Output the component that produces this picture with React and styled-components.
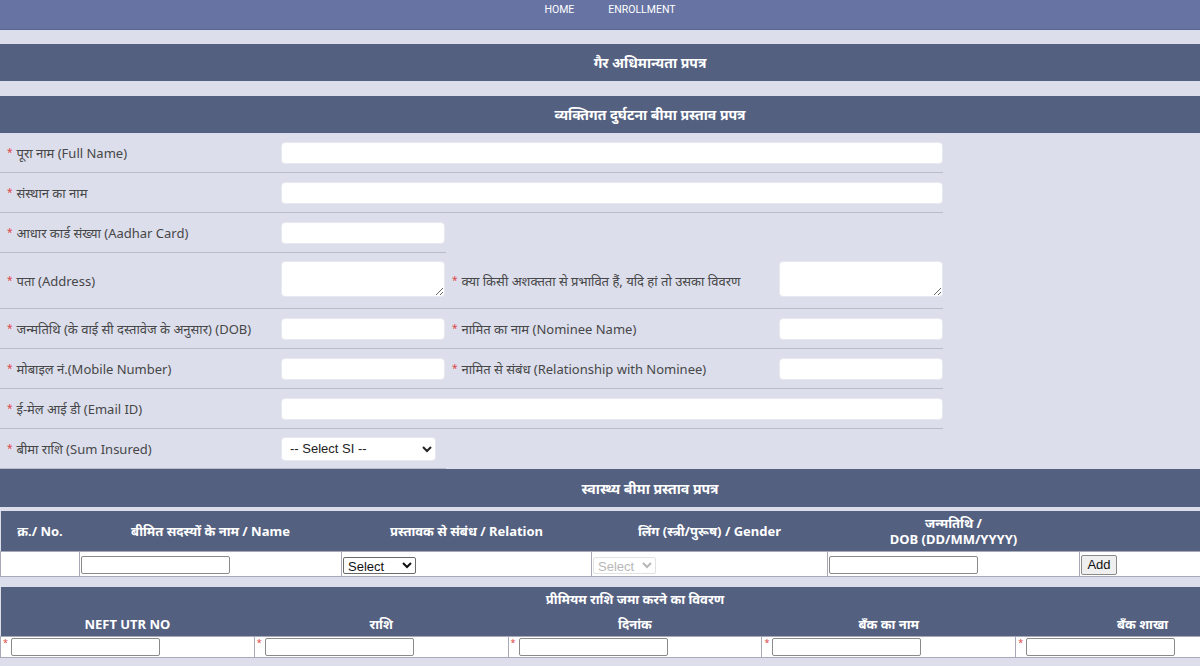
import React from 'react';
import styled, { createGlobalStyle } from 'styled-components';

const GlobalStyle = createGlobalStyle`
  html, body { margin: 0; padding: 0; overflow: hidden; }
  body {
    background: #dcdeec;
    font-family: "Noto Sans", "Noto Sans Devanagari", "Lohit Devanagari", sans-serif;
    color: #474747;
  }
  * { box-sizing: border-box; }
`;

const Page = styled.div`
  width: 1300px;
  padding-bottom: 20px;
`;

const Nav = styled.nav`
  height: 30px;
  background: #6673a3;
  border-bottom: 1px solid #5a6794;
  display: flex;
  justify-content: center;
  align-items: flex-start;
  gap: 34px;
  padding-right: 80px;
`;

const NavLink = styled.a`
  color: #fff;
  font-family: "Roboto", "Liberation Sans", sans-serif;
  font-size: 10.5px;
  line-height: 20px;
  text-transform: uppercase;
  text-decoration: none;
`;

const SectionTitle = styled.div`
  margin-top: ${(p) => p.$gap}px;
  height: ${(p) => p.$h || 37}px;
  background: #546080;
  color: #fff;
  font-weight: 700;
  font-size: 14px;
  display: flex;
  align-items: center;
  justify-content: center;
`;

const FormGrid = styled.div`
  display: grid;
  width: 943px;
  grid-template-columns: 276px 170px 328px 169px;
`;

const Cell = styled.div`
  display: flex;
  align-items: center;
  min-height: ${(p) => (p.$tall ? 56 : 40)}px;
  border-bottom: ${(p) => (p.$noLine ? 'none' : '1px solid #bcbcc6')};
  grid-column: span ${(p) => p.$span || 1};
  padding-left: ${(p) => p.$pl ?? 5}px;
  font-size: 13px;
  color: #474747;
`;

const Star = styled.span`
  color: #e0453f;
  font-size: 10px;
  margin-right: 4px;
  position: relative;
  top: -1px;
`;

const TextInput = styled.input`
  width: ${(p) => p.$w || 164}px;
  height: 22px;
  border: 1px solid #e8e8f0;
  border-radius: 4px;
  background: #fff;
  outline: none;
`;

const TextArea = styled.textarea`
  width: 164px;
  height: 36px;
  border: 1px solid #e8e8f0;
  border-radius: 4px;
  background: #fff;
  margin: 0 0 3px 0;
  display: block;
`;

const SISelect = styled.select`
  width: 155px;
  height: 24px;
  border: 1px solid #e8e8f0;
  border-radius: 4px;
  background: #fff;
  font-family: "Liberation Sans", Arial, sans-serif;
  font-size: 13px;
  color: #222;
  padding-left: 4px;
`;

const Table = styled.table`
  width: ${(p) => p.$w}px;
  border-collapse: collapse;
  margin-top: ${(p) => p.$gap}px;
  table-layout: fixed;
`;

const Th = styled.th`
  background: #546080;
  color: #fff;
  font-weight: 700;
  font-size: 13px;
  height: ${(p) => p.$h}px;
  padding: 0;
  text-align: center;
  line-height: 16px;
`;

const Td = styled.td`
  background: #fff;
  border: 1px solid #a7a9b8;
  height: ${(p) => p.$h}px;
  padding: 0 1px;
  vertical-align: middle;
`;

const SmallInput = styled.input`
  width: 149px;
  height: 18px;
  border: 1px solid #8a8a8a;
  border-radius: 2px;
  padding: 1px 2px;
  background: #fff;
  vertical-align: middle;
`;

const SmallSelect = styled.select`
  width: ${(p) => p.$w}px;
  height: 17px;
  font-family: "Liberation Sans", Arial, sans-serif;
  font-size: 13px;
  border: 1px solid ${(p) => (p.disabled ? '#d6d6d6' : '#6a6a6a')};
  border-radius: 2px;
  color: ${(p) => (p.disabled ? '#9a9a9a' : '#111')};
  background: #fff;
  padding: 0;
  vertical-align: middle;
`;

const AddButton = styled.button`
  height: 20px;
  width: 36px;
  font-family: "Liberation Sans", Arial, sans-serif;
  font-size: 13px;
  border: 1px solid #8a8a8a;
  border-radius: 2px;
  background: #efefef;
  color: #111;
  padding: 0;
  vertical-align: middle;
`;

const StarCell = styled.div`
  display: flex;
  align-items: center;
  height: 19px;
`;

const MiniStar = styled.span`
  color: #e0453f;
  font-size: 9px;
  line-height: 9px;
  width: 9px;
  padding-left: 1px;
  align-self: flex-start;
`;

const req = (text) => (
  <>
    <Star>*</Star>
    {text}
  </>
);

export default function App() {
  return (
    <Page>
      <GlobalStyle />
      <Nav>
        <NavLink href="#">Home</NavLink>
        <NavLink href="#">Enrollment</NavLink>
      </Nav>

      <SectionTitle $gap={14}>गैर अधिमान्यता प्रपत्र</SectionTitle>
      <SectionTitle $gap={15}>व्यक्तिगत दुर्घटना बीमा प्रस्ताव प्रपत्र</SectionTitle>

      <FormGrid>
        <Cell $pl={7}>{req('पूरा नाम (Full Name)')}</Cell>
        <Cell $span={3}><TextInput $w={662} /></Cell>

        <Cell $pl={7}>{req('संस्थान का नाम')}</Cell>
        <Cell $span={3}><TextInput $w={662} /></Cell>

        <Cell $pl={7}>{req('आधार कार्ड संख्या (Aadhar Card)')}</Cell>
        <Cell><TextInput /></Cell>
        <Cell $span={2} $noLine />

        <Cell $pl={7} $tall>{req('पता (Address)')}</Cell>
        <Cell $tall><TextArea /></Cell>
        <Cell $tall $pl={6}>{req('क्या किसी अशक्तता से प्रभावित हैं, यदि हां तो उसका विवरण')}</Cell>
        <Cell $tall><TextArea /></Cell>

        <Cell $pl={7}>{req('जन्मतिथि (के वाई सी दस्तावेज के अनुसार) (DOB)')}</Cell>
        <Cell><TextInput /></Cell>
        <Cell $pl={6}>{req('नामित का नाम (Nominee Name)')}</Cell>
        <Cell><TextInput /></Cell>

        <Cell $pl={7}>{req('मोबाइल नं.(Mobile Number)')}</Cell>
        <Cell><TextInput /></Cell>
        <Cell $pl={6}>{req('नामित से संबंध (Relationship with Nominee)')}</Cell>
        <Cell><TextInput /></Cell>

        <Cell $pl={7}>{req('ई-मेल आई डी (Email ID)')}</Cell>
        <Cell $span={3}><TextInput $w={662} /></Cell>

        <Cell $pl={7}>{req('बीमा राशि (Sum Insured)')}</Cell>
        <Cell>
          <SISelect defaultValue="">
            <option value="">-- Select SI --</option>
          </SISelect>
        </Cell>
        <Cell $span={2} $noLine />
      </FormGrid>

      <SectionTitle $gap={0} $h={38}>स्वास्थ्य बीमा प्रस्ताव प्रपत्र</SectionTitle>

      <Table $w={1300} $gap={4}>
        <colgroup>
          <col style={{ width: 79 }} />
          <col style={{ width: 262 }} />
          <col style={{ width: 250 }} />
          <col style={{ width: 236 }} />
          <col style={{ width: 252 }} />
          <col />
        </colgroup>
        <thead>
          <tr>
            <Th $h={40}>क्र./ No.</Th>
            <Th $h={40}>बीमित सदस्यों के नाम / Name</Th>
            <Th $h={40}>प्रस्तावक से संबंध / Relation</Th>
            <Th $h={40}>लिंग (स्त्री/पुरूष) / Gender</Th>
            <Th $h={40}>जन्मतिथि /<br />DOB (DD/MM/YYYY)</Th>
            <Th $h={40}></Th>
          </tr>
        </thead>
        <tbody>
          <tr>
            <Td $h={25}></Td>
            <Td $h={25}><SmallInput /></Td>
            <Td $h={25}>
              <SmallSelect $w={73} defaultValue="">
                <option value="">Select</option>
              </SmallSelect>
            </Td>
            <Td $h={25}>
              <SmallSelect $w={63} disabled defaultValue="">
                <option value="">Select</option>
              </SmallSelect>
            </Td>
            <Td $h={25}><SmallInput /></Td>
            <Td $h={25}><AddButton>Add</AddButton></Td>
          </tr>
        </tbody>
      </Table>

      <Table $w={1270} $gap={10}>
        <thead>
          <tr>
            <Th $h={25} colSpan={5}>प्रीमियम राशि जमा करने का विवरण</Th>
          </tr>
          <tr>
            <Th $h={25}>NEFT UTR NO</Th>
            <Th $h={25}>राशि</Th>
            <Th $h={25}>दिनांक</Th>
            <Th $h={25}>बॅंक का नाम</Th>
            <Th $h={25}>बॅंक शाखा</Th>
          </tr>
        </thead>
        <tbody>
          <tr>
            {[0, 1, 2, 3, 4].map((i) => (
              <Td $h={21} key={i}>
                <StarCell>
                  <MiniStar>*</MiniStar>
                  <SmallInput />
                </StarCell>
              </Td>
            ))}
          </tr>
        </tbody>
      </Table>
    </Page>
  );
}
